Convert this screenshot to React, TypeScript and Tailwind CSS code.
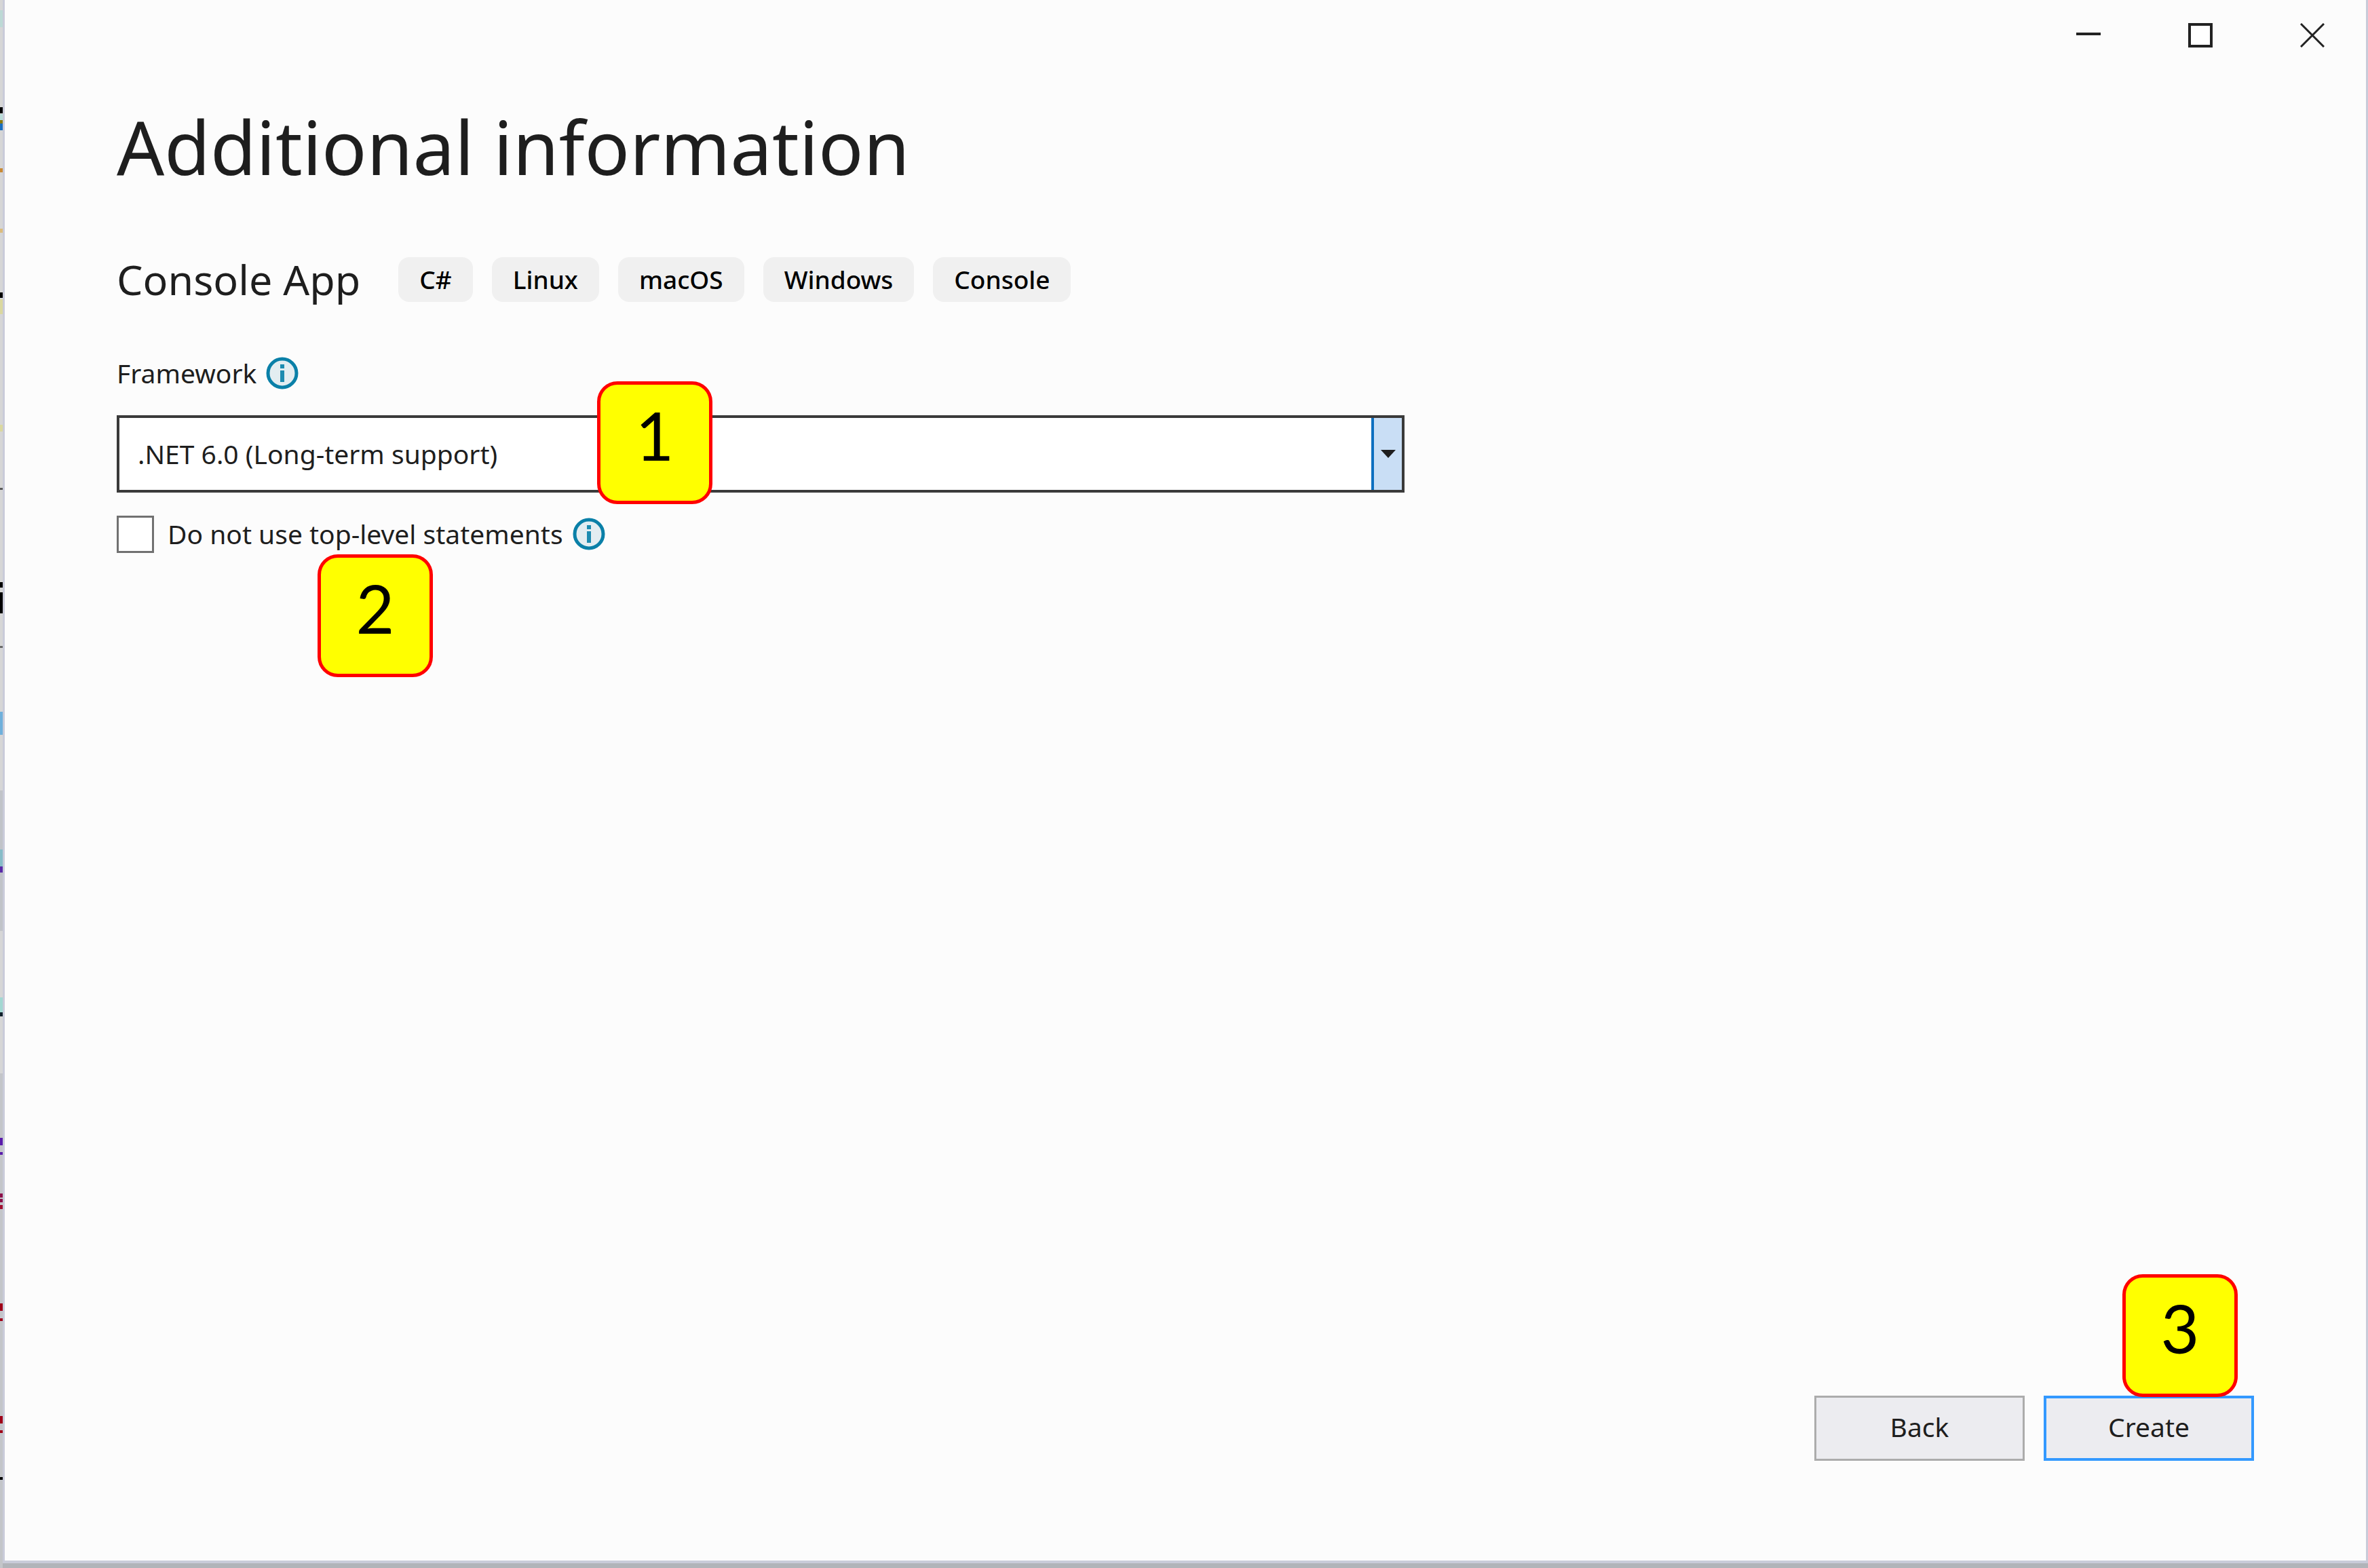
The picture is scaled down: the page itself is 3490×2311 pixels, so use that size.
import React from "react";

const TAGS = ["C#", "Linux", "macOS", "Windows", "Console"];

// Slivers of the editor that lies behind the dialog: [top, height, colour]
const SLIVERS: [number, number, string][] = [
  [1165, 207, "#c0c3c8"],
  [1582, 729, "#c3c5c9"],
  [15, 25, "#bcd9d5"],
  [158, 9, "#000000"],
  [168, 9, "#b9dcd8"],
  [177, 5, "#8a7a10"],
  [182, 10, "#1a6fc0"],
  [248, 6, "#c98a35"],
  [337, 6, "#dcbc7c"],
  [431, 8, "#000000"],
  [441, 22, "#dad89f"],
  [626, 10, "#dad89f"],
  [719, 3, "#5a5a5a"],
  [858, 8, "#000000"],
  [873, 31, "#000000"],
  [952, 3, "#6a6a6a"],
  [1049, 34, "#6fb0dc"],
  [1252, 25, "#86bcc8"],
  [1277, 9, "#5a2ca8"],
  [1470, 22, "#a2d8d2"],
  [1492, 6, "#10202c"],
  [1677, 11, "#5a1cab"],
  [1698, 4, "#5a1cab"],
  [1759, 6, "#8c1048"],
  [1767, 5, "#8c1048"],
  [1776, 6, "#a01030"],
  [1921, 11, "#a00018"],
  [1943, 4, "#a00018"],
  [2087, 11, "#a00018"],
  [2108, 4, "#a00018"],
  [2177, 4, "#000000"],
];

function InfoIcon() {
  return (
    <svg className="size-12 shrink-0" viewBox="0 0 48 48" aria-hidden="true">
      <circle cx="24" cy="24" r="21" fill="#e3edf1" stroke="#0a80a8" strokeWidth="5" />
      <rect x="21" y="11" width="6" height="6" fill="#1d8bb0" />
      <rect x="21" y="20" width="6" height="17" fill="#1d8bb0" />
    </svg>
  );
}

function Badge({ n, className }: { n: number; className: string }) {
  return (
    <span
      className={`pointer-events-none absolute flex h-[181px] w-[170px] justify-center rounded-[30px] border-5 border-[#ff0000] bg-[#ffff00] pt-[18px] font-['Lato',sans-serif] text-[98px] leading-[112px] text-black ${className}`}
    >
      {n}
    </span>
  );
}

function CaptionButton({ label, children }: { label: string; children: React.ReactNode }) {
  return (
    <button type="button" aria-label={label} className="flex h-[104px] w-[165px] items-center justify-center">
      <svg className="size-9" viewBox="0 0 36 36" fill="none" stroke="#222222" aria-hidden="true">
        {children}
      </svg>
    </button>
  );
}

export default function App() {
  return (
    <div className="flex min-h-screen bg-[#b1b4b9] font-['Noto_Sans',sans-serif] text-[#1e1e1e]">
      <svg className="w-1 shrink-0 self-stretch bg-[#d6d6d6]" aria-hidden="true">
        {SLIVERS.map(([y, h, fill]) => (
          <rect key={y} x="0" y={y} width="4" height={h} fill={fill} />
        ))}
      </svg>
      <div className="mb-[7px] flex flex-1 flex-col border-r-3 border-b-4 border-l-3 border-[#c9cbd9] bg-[#fcfcfc]">
        <header className="-mr-[3px] flex justify-end">
          <CaptionButton label="Minimize">
            <path d="M0 16h36" strokeWidth="4" />
          </CaptionButton>
          <CaptionButton label="Maximize">
            <rect x="2" y="2" width="32" height="32" strokeWidth="4" fill="#ffffff" />
          </CaptionButton>
          <CaptionButton label="Close">
            <path d="M1 1l34 34M35 1L1 35" strokeWidth="3" />
          </CaptionButton>
        </header>

        <main className="flex flex-1 flex-col px-[165px] pb-[147px]">
          <h1 className="mt-9 text-[110px] leading-[150px]">Additional information</h1>

          <div className="mt-20 flex items-center gap-14">
            <h2 className="text-[61px] leading-[84px] font-normal">Console App</h2>
            <ul className="flex gap-7">
              {TAGS.map((t) => (
                <li key={t} className="rounded-2xl bg-[#f0f0f0] px-[31px] text-[37px] leading-[66px] font-medium text-black">
                  {t}
                </li>
              ))}
            </ul>
          </div>

          <div className="mt-[66px] flex items-center gap-3.5">
            <label htmlFor="framework" className="text-[39px] leading-[60px]">
              Framework
            </label>
            <InfoIcon />
          </div>

          <div className="relative mt-8 w-full max-w-[1898px]">
            <select
              id="framework"
              className="block h-[114px] w-full appearance-none border-4 border-[#3a3a3a] bg-white pr-16 pl-[27px] text-[39px]"
            >
              <option>.NET 6.0 (Long-term support)</option>
            </select>
            <span className="pointer-events-none absolute inset-y-1 right-1 flex w-[45px] items-center justify-center border-l-4 border-[#0e70c0] bg-[#c9def5]">
              <svg className="h-3 w-6" viewBox="0 0 24 12" aria-hidden="true">
                <path d="M1 0h22L12 12z" fill="#1e1e1e" />
              </svg>
            </span>
            <Badge n={1} className="-top-[50px] left-[708px]" />
          </div>

          <div className="relative mt-[31px] flex items-center gap-3.5">
            <input
              id="top-level"
              type="checkbox"
              className="mr-1.5 size-[55px] shrink-0 appearance-none border-3 border-[#717171] bg-white checked:bg-[#0e70c0]"
            />
            <label htmlFor="top-level" className="text-[39px] leading-[60px]">
              Do not use top-level statements
            </label>
            <InfoIcon />
            <Badge n={2} className="top-[60px] left-[296px]" />
          </div>

          <footer className="mt-auto flex justify-end gap-7">
            <button type="button" className="h-24 w-[310px] border-3 border-[#acacac] bg-[#ececf0] pb-1 text-[39px]">
              Back
            </button>
            <div className="relative">
              <button type="button" className="h-24 w-[310px] border-4 border-[#3399ff] bg-[#ececf0] pb-1 text-[39px]">
                Create
              </button>
              <Badge n={3} className="-top-[179px] left-[116px]" />
            </div>
          </footer>
        </main>
      </div>
    </div>
  );
}
